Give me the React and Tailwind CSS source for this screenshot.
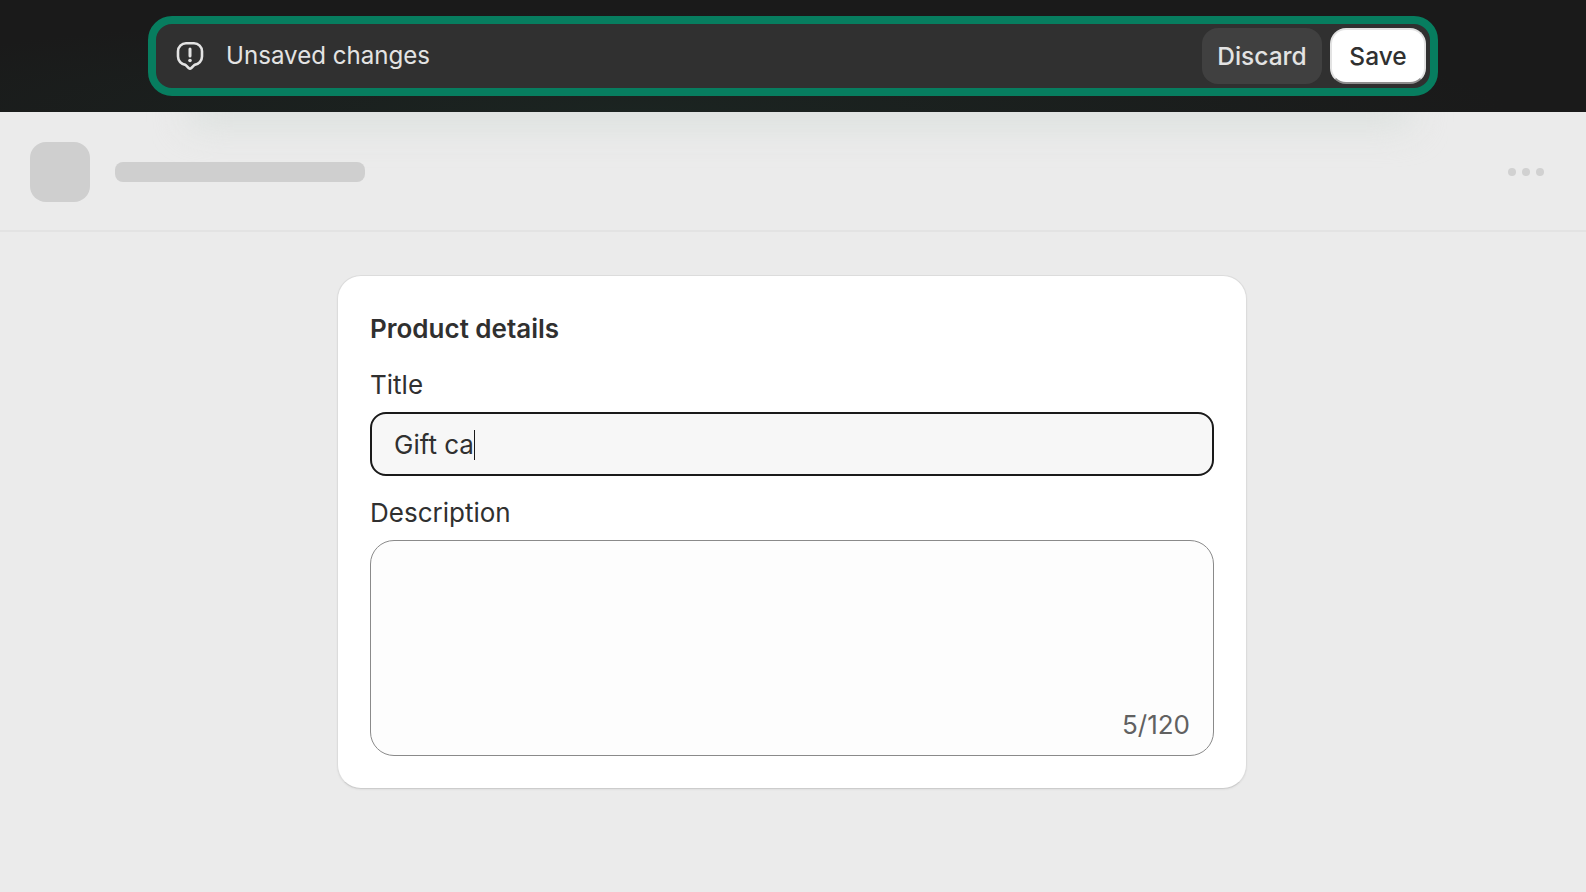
import React from "react";

const AlertBubble = () => (
  <svg width="28" height="30" viewBox="0 0 28 30" fill="none" className="shrink-0">
    <path
      d="M10 2.300h8a8 8 0 0 1 8 8v5.200a8.500 8.500 0 0 1-7.500 8.400l-3.400 3.300a1.500 1.500 0 0 1-2.200 0l-3.400-3.300a8.500 8.500 0 0 1-7.500-8.400v-5.200a8 8 0 0 1 8-8Z"
      stroke="#e3e3e3"
      strokeWidth="2.600"
      strokeLinejoin="round"
    />
    <path d="M14 8v7" stroke="#e3e3e3" strokeWidth="3" strokeLinecap="round" />
    <circle cx="14" cy="19.500" r="1.800" fill="#e3e3e3" />
  </svg>
);

const App = () => {
  return (
    <div className="relative h-[892px] overflow-hidden bg-[#ebebeb] font-['Inter',sans-serif]">
      {/* Save bar */}
      <div className="relative z-10 h-[112px] bg-[#1a1c1c] bg-[radial-gradient(ellipse_55%_90%_at_40%_100%,#1b2421,#1a1a1a)] px-[148px] pt-4">
        <div className="flex h-20 items-center rounded-3xl border-8 border-[#077d5f] bg-[#303030] pl-5 pr-1">
          <AlertBubble />
          <span className="ml-[22px] flex-1 text-[24.100px] text-[#e3e3e3]">Unsaved changes</span>
          <button className="h-14 w-[120px] rounded-2xl bg-[#404040] pt-px text-[24.500px] font-medium text-[#e3e3e3]">
            Discard
          </button>
          <button className="ml-2 h-14 w-24 rounded-2xl border-2 border-[#e3e3e3] border-b-[#8f8f8f] bg-white pt-px text-[24.500px] font-medium text-[#303030]">
            Save
          </button>
        </div>
      </div>
      {/* Glow under the bar */}
      <div className="absolute left-[190px] top-[92px] h-[32px] w-[1220px] bg-[#d9dfdc] blur-[18px]"></div>

      {/* Page header skeleton */}
      <div className="relative flex h-[120px] items-center justify-between border-b-2 border-[#e3e3e3] pl-[30px] pr-[42px] pt-0.5">
        <div className="flex items-center gap-[25px]">
          <div className="h-[60px] w-[60px] rounded-2xl bg-[#cfcfcf]"></div>
          <div className="h-5 w-[250px] rounded-lg bg-[#cfcfcf]"></div>
        </div>
        <div className="flex gap-1.5">
          <div className="h-2 w-2 rounded-full bg-[#d1d1d1]"></div>
          <div className="h-2 w-2 rounded-full bg-[#d1d1d1]"></div>
          <div className="h-2 w-2 rounded-full bg-[#d1d1d1]"></div>
        </div>
      </div>

      {/* Product card */}
      <div className="ml-[337px] mt-[43px] h-[514px] w-[910px] rounded-3xl border border-[#dcdcdc] border-b-[#cccccc] bg-white px-8 pt-[33px] shadow-[0_1px_2px_#0000000d]">
        <h2 className="text-[26px] leading-10 font-semibold text-[#303030]">Product details</h2>
        <label className="mt-[16px] block text-[26px] leading-10 text-[#303030]">Title</label>
        <div className="mt-[7px] flex h-16 items-center rounded-2xl border-2 border-[#1a1a1a] bg-[#f7f7f7] pl-[22px] pt-px text-[26px] text-[#303030]">
          Gift ca<span className="h-[30px] w-[1.500px] bg-[#1a1a1a]"></span>
        </div>
        <label className="mt-[17px] block text-[26px] leading-10 text-[#303030]">Description</label>
        <div className="mt-[7px] flex h-[216px] items-end justify-end rounded-3xl border-[1.500px] border-[#8a8a8a] bg-[#fdfdfd] px-[23px] pb-[11px] text-[26px] text-[#616161]">
          5/120
        </div>
      </div>
    </div>
  );
};

export default App;
